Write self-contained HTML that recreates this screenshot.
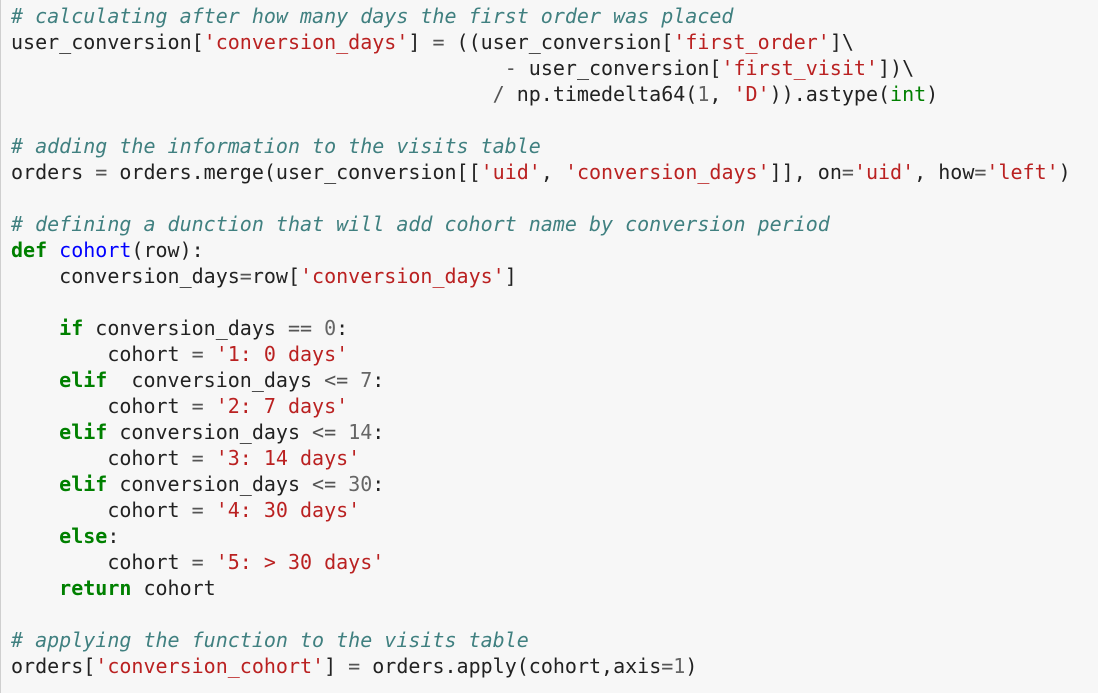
<!DOCTYPE html>
<html><head><meta charset="utf-8"><style>
html,body{margin:0;padding:0;width:1098px;height:693px;overflow:hidden;background:#f7f7f7;}
.cell{position:absolute;left:0;top:0;width:1096px;height:693px;border-left:1px solid #cfcfcf;background:#f7f7f7;}
pre{margin:0;position:absolute;left:10px;top:3px;font-family:"DejaVu Sans Mono","Liberation Mono",monospace;font-size:20px;line-height:26px;color:#222;letter-spacing:0;}
.c{color:#408080;font-style:italic}
.s{color:#ba2121}
.k{color:#008000;font-weight:bold}
.f{color:#0000ff}
.n{color:#666}
.o{color:#555}
</style></head><body><div class="cell"><pre><span class="c"># calculating after how many days the first order was placed</span>
user_conversion[<span class="s">'conversion_days'</span>] <span class="o">=</span> ((user_conversion[<span class="s">'first_order'</span>]\
                                         <span class="o">-</span> user_conversion[<span class="s">'first_visit'</span>])\
                                        <span class="o">/</span> np.timedelta64(<span class="n">1</span>, <span class="s">'D'</span>)).astype(<span class="k" style="font-weight:normal">int</span>)

<span class="c"># adding the information to the visits table</span>
orders <span class="o">=</span> orders.merge(user_conversion[[<span class="s">'uid'</span>, <span class="s">'conversion_days'</span>]], on<span class="o">=</span><span class="s">'uid'</span>, how<span class="o">=</span><span class="s">'left'</span>)

<span class="c"># defining a dunction that will add cohort name by conversion period</span>
<span class="k">def</span> <span class="f">cohort</span>(row):
    conversion_days<span class="o">=</span>row[<span class="s">'conversion_days'</span>]

    <span class="k">if</span> conversion_days <span class="o">==</span> <span class="n">0</span>:
        cohort <span class="o">=</span> <span class="s">'1: 0 days'</span>
    <span class="k">elif</span>  conversion_days <span class="o">&lt;=</span> <span class="n">7</span>:
        cohort <span class="o">=</span> <span class="s">'2: 7 days'</span>
    <span class="k">elif</span> conversion_days <span class="o">&lt;=</span> <span class="n">14</span>:
        cohort <span class="o">=</span> <span class="s">'3: 14 days'</span>
    <span class="k">elif</span> conversion_days <span class="o">&lt;=</span> <span class="n">30</span>:
        cohort <span class="o">=</span> <span class="s">'4: 30 days'</span>
    <span class="k">else</span>:
        cohort <span class="o">=</span> <span class="s">'5: &gt; 30 days'</span>
    <span class="k">return</span> cohort

<span class="c"># applying the function to the visits table</span>
orders[<span class="s">'conversion_cohort'</span>] <span class="o">=</span> orders.apply(cohort,axis<span class="o">=</span><span class="n">1</span>)</pre></div></body></html>
